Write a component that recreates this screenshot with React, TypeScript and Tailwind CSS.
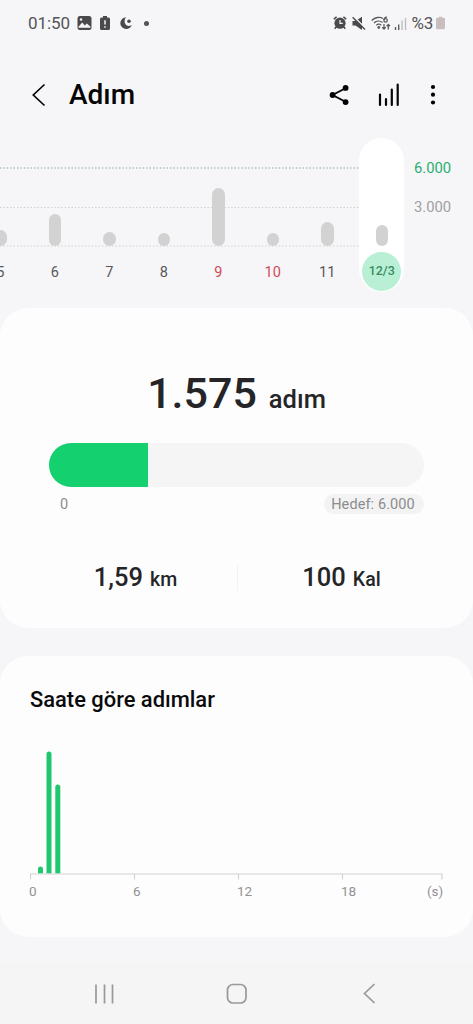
import React from 'react';

type Day = { label: string; height: number; tone?: 'holiday' | 'selected' };

const days: Day[] = [
  { label: '5', height: 16 },
  { label: '6', height: 32 },
  { label: '7', height: 14 },
  { label: '8', height: 13 },
  { label: '9', height: 58, tone: 'holiday' },
  { label: '10', height: 13, tone: 'holiday' },
  { label: '11', height: 24 },
  { label: '12/3', height: 21, tone: 'selected' },
];

function StatusBar() {
  return (
    <div className="flex h-[46px] items-center justify-between pl-[28px] pr-[28px] text-[#535355]">
      <div className="flex items-center">
        <span className="w-[43px] text-[17px] leading-5 tracking-[-0.1px]">01:50</span>
        <svg className="ml-[6px]" width="15" height="14" viewBox="0 0 15 14">
          <rect x="0.5" y="0" width="14" height="14" rx="2.5" fill="#4a4a4c" />
          <path d="M1.5 10.8 5.2 6.5l2.6 3 2-2.1 3.7 3.4v1H1.5z" fill="#f6f6f8" />
          <circle cx="4" cy="3.5" r="1.2" fill="#f6f6f8" />
        </svg>
        <svg className="ml-[8px]" width="10" height="14" viewBox="0 0 10 14">
          <path d="M3 0h4v1.5h1.5A1.5 1.5 0 0 1 10 3v9.5A1.5 1.5 0 0 1 8.5 14h-7A1.5 1.5 0 0 1 0 12.5V3a1.5 1.5 0 0 1 1.5-1.5H3z" fill="#4a4a4c" />
          <path d="M5 4.2v4.3M5 10.3v1.5" stroke="#f6f6f8" strokeWidth="1.5" />
        </svg>
        <svg className="ml-[10px]" width="12" height="12" viewBox="0 0 12 12">
          <path d="M6.2.2A5.900 5.900 0 1 0 11.800 8C9 9.800 5.800 8.800 4.900 6 4.200 3.700 4.900 1.500 6.200.2z" fill="#4a4a4c" />
          <circle cx="9" cy="4.200" r="1.800" fill="#4a4a4c" />
        </svg>
        <span className="ml-[12px] size-[5px] rounded-full bg-[#535355]" />
      </div>
      <div className="flex items-center">
        <svg width="14" height="14" viewBox="0 0 14 14">
          <path d="M.8 3.2 3.6.9M13.200 3.200 10.400.9" stroke="#4a4a4c" strokeWidth="1.500" />
          <path d="m3.500 10.500-1.800 2.300M10.500 10.500l1.800 2.300" stroke="#4a4a4c" strokeWidth="1.500" />
          <circle cx="7" cy="7.200" r="5.600" fill="#4a4a4c" />
          <path d="M7 4v3.400h2.800" fill="none" stroke="#f6f6f8" strokeWidth="1.200" />
        </svg>
        <svg className="ml-[5px]" width="14" height="14" viewBox="0 0 14 14">
          <path d="M0.500 5h3L10 .8V14L3.500 9.500h-3z" fill="#4a4a4c" />
          <path d="M1.500.5 14 13" stroke="#f6f6f8" strokeWidth="1.600" />
          <path d="M.6 1.300 13 13.500" stroke="#4a4a4c" strokeWidth="1.400" />
        </svg>
        <svg className="ml-[5px]" width="20" height="15" viewBox="0 0 20 15">
          <g fill="none" stroke="#5c5c5e" strokeWidth="1.300">
            <path d="M.7 4.500C4 1 9 .7 12 2.500M3 7c2.300-2.300 6-2.500 8.600-.5M5.300 9.300c1.500-1.400 3.500-1.300 5 0" />
            <circle cx="14.600" cy="4.400" r="1.700" />
            <path d="M16 1.200c-2-.2-3 1.200-3.100 3.200" />
            <path d="M13 8v5m-1.800-1.800L13 13l1.700-1.800M17.300 13.500V8.600m-1.700 1.700 1.700-1.800 1.700 1.800" />
          </g>
          <circle cx="7.800" cy="11.500" r="1.400" fill="#5c5c5e" />
        </svg>
        <svg className="ml-[3px]" width="14" height="13" viewBox="0 0 14 13">
          <path d="M1.500 10v3M4.700 7.500V13" stroke="#5c5c5e" strokeWidth="1.400" />
          <path d="M8 3.500V13M11.500 1v12" stroke="#bebec0" strokeWidth="1.400" />
        </svg>
        <span className="ml-[4px] w-[22px] text-[17px] leading-5 tracking-[-0.3px]">%3</span>
        <svg className="ml-[2.5px]" width="9" height="14" viewBox="0 0 10 14">
          <path d="M3 0h4v1.300h1.500A1.500 1.500 0 0 1 10 2.800v9.700A1.500 1.500 0 0 1 8.500 14h-7A1.500 1.500 0 0 1 0 12.500V2.800a1.500 1.500 0 0 1 1.500-1.500H3z" fill="#c8bebf" />
        </svg>
      </div>
    </div>
  );
}

function Header() {
  return (
    <header className="flex h-[84px] items-center pl-[31px] pt-[13px]">
      <svg width="16" height="24" viewBox="0 0 16 24">
        <path d="M13.500 1.500 2.300 12l11.200 10.500" fill="none" stroke="#050505" strokeWidth="1.700" />
      </svg>
      <h1 className="ml-[22px] w-[68px] pt-px text-[28px] font-medium leading-8 text-[#050505]">Adım</h1>
      <svg className="ml-[192px]" width="20" height="22" viewBox="0 0 20 22">
        <path d="M17 4 3.500 11 17 18" fill="none" stroke="#050505" strokeWidth="1.900" />
        <circle cx="16.600" cy="3.900" r="2.900" />
        <circle cx="3.600" cy="11" r="2.900" />
        <circle cx="16.600" cy="18.100" r="2.900" />
      </svg>
      <svg className="ml-[28px]" width="24" height="24" viewBox="0 0 24 24">
        <path d="M3 11.500V22M9 16v6M14.800 6.500V22M20.700 1.500V22" stroke="#050505" strokeWidth="2.200" strokeLinecap="round" />
      </svg>
      <svg className="ml-[28px]" width="8" height="22" viewBox="0 0 8 22">
        <circle cx="4" cy="3" r="2.100" />
        <circle cx="4" cy="10.700" r="2.100" />
        <circle cx="4" cy="18.500" r="2.100" />
      </svg>
    </header>
  );
}

function DayColumn({ day }: { day: Day }) {
  const selected = day.tone === 'selected';
  return (
    <div className="flex w-[54.5px] shrink-0 justify-center">
      <div className={selected ? 'flex h-[154px] w-[45px] flex-col items-center rounded-full bg-white' : 'flex h-[154px] w-[45px] flex-col items-center'}>
        <div className="flex h-[108px] items-end">
          <div className="w-[12.5px] rounded-full bg-[#d2d2d2]" style={{ height: day.height }} />
        </div>
        <div className={
          selected
            ? 'mt-[6px] flex size-[39px] items-center justify-center rounded-full bg-[#b9f0d5] text-[12.5px] font-medium text-[#388b63]'
            : day.tone === 'holiday'
              ? 'mt-[7px] flex size-[39px] items-center justify-center text-[14.5px] text-[#ce4b58]'
              : 'mt-[7px] flex size-[39px] items-center justify-center text-[14.5px] text-[#58585a]'
        }>
          {day.label}
        </div>
      </div>
    </div>
  );
}

function WeekChart() {
  return (
    <section className="relative flex h-[178px] overflow-hidden pt-[8px]">
      <svg className="absolute left-0 top-0" width="360" height="125" viewBox="0 0 360 125">
        <path d="M0 38H360" stroke="#a9c0bb" strokeWidth="1.400" strokeDasharray="1.400 2" />
        <path d="M0 77.500H360M0 116H360" stroke="#cfcfd1" strokeWidth="1.200" strokeDasharray="1.400 2" />
      </svg>
      <div className="relative -ml-[27px] flex">
        {days.map((day) => <DayColumn key={day.label} day={day} />)}
      </div>
      <div className="ml-[5px] pt-[20px] text-[14.8px] leading-5">
        <div className="text-[#28af70]">6.000</div>
        <div className="mt-[19px] text-[#a0a0a2]">3.000</div>
      </div>
    </section>
  );
}

function SummaryCard() {
  return (
    <section className="h-[320px] rounded-[28px] bg-[#fdfdfe] pt-[60px] text-[#252528]">
      <div className="flex items-baseline justify-center font-medium">
        <span className="text-[43px] leading-[50px]">1.575</span>
        <span className="ml-[12px] text-[25.5px]">adım</span>
      </div>
      <div className="mx-[49px] mt-[25px] h-[44px] overflow-hidden rounded-full bg-[#f5f5f5]">
        <div className="h-full w-[99px] bg-[#14d06f]" />
      </div>
      <div className="ml-[60px] mr-[49px] mt-[7px] flex h-[20px] items-center justify-between text-[14.5px] text-[#8c8c8e]">
        <span className="pt-[2px]">0</span>
        <span className="flex h-[20px] w-[100px] items-center justify-center rounded-full bg-[#f3f3f3] pr-[2px] pt-px tracking-[0.1px]">Hedef: 6.000</span>
      </div>
      <div className="mt-[48px] flex items-center pl-[34px] pr-[30px] font-medium">
        <div className="flex flex-1 items-baseline justify-center">
          <span className="text-[25.500px] leading-[30px]">1,59</span>
          <span className="ml-[7px] text-[19.5px]">km</span>
        </div>
        <div className="h-[26px] w-px bg-[#f3f3f4]" />
        <div className="flex flex-1 items-baseline justify-center pl-[2px]">
          <span className="text-[25.500px] leading-[30px]">100</span>
          <span className="ml-[7px] text-[19.5px]">Kal</span>
        </div>
      </div>
    </section>
  );
}

function HourlyCard() {
  return (
    <section className="mt-[28px] h-[281px] rounded-[28px] bg-[#fdfdfe] pl-[30px] pt-[30px]">
      <h2 className="text-[21.9px] font-medium leading-7 text-[#0a0a0b]">Saate göre adımlar</h2>
      <svg className="mt-[32px] block" width="414" height="134" viewBox="0 0 414 134">
        <path d="M8 127.500V123a2.500 2.500 0 0 1 5 0v4.500zM16.500 127.500V8a2.500 2.500 0 0 1 5 0v119.500zM25.300 127.500V41a2.500 2.500 0 0 1 5 0v86.500z" fill="#20c76f" />
        <path d="M.5 133.500V128H412V133.500M104.500 128v5.500M208.500 128v5.500M312.500 128v5.500" fill="none" stroke="#d3d3d5" strokeWidth="1.200" />
      </svg>
      <div className="-ml-px flex h-5 items-center pt-px text-[13.5px] leading-4 text-[#929294]">
        <span className="w-[104px]">0</span>
        <span className="w-[104px]">6</span>
        <span className="w-[104px]">12</span>
        <span className="w-[86px]">18</span>
        <span>(s)</span>
      </div>
    </section>
  );
}

function NavigationBar() {
  return (
    <nav className="mt-[26px] flex h-[61px] items-center bg-[#f5f5f6] pl-[94px]">
      <svg width="22" height="20" viewBox="0 0 22 20">
        <path d="M2 .5v19M10.500.5v19M18.500.5v19" stroke="#99999b" strokeWidth="1.700" />
      </svg>
      <svg className="ml-[109px]" width="22" height="22" viewBox="0 0 22 22">
        <rect x="2.500" y="1.500" width="18.500" height="18.500" rx="5.500" fill="none" stroke="#99999b" strokeWidth="1.700" />
      </svg>
      <svg className="ml-[115px]" width="15" height="22" viewBox="0 0 15 22">
        <path d="M12.500 1 2.500 10.500l10 9.500" fill="none" stroke="#99999b" strokeWidth="1.700" />
      </svg>
    </nav>
  );
}

export default function App() {
  return (
    <main className="h-[1024px] w-[473px] overflow-hidden bg-[#f6f6f8] font-[Roboto,sans-serif]">
      <StatusBar />
      <Header />
      <WeekChart />
      <SummaryCard />
      <HourlyCard />
      <NavigationBar />
    </main>
  );
}
